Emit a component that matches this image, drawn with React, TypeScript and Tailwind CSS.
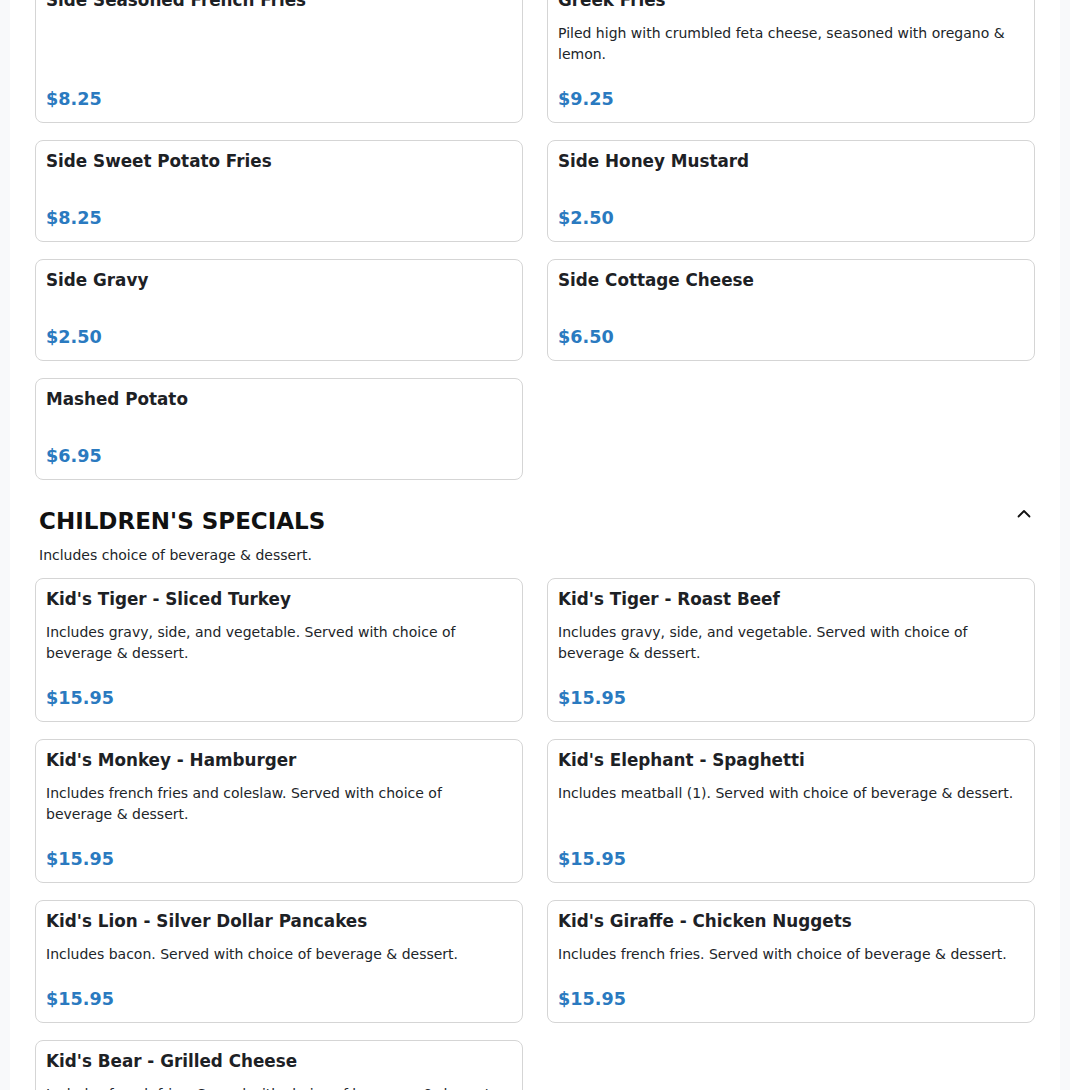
import React from "react";

type Item = { name: string; desc?: string; price: string };

const sides: Item[] = [
  { name: "Side Seasoned French Fries", price: "$8.25" },
  {
    name: "Greek Fries",
    desc: "Piled high with crumbled feta cheese, seasoned with oregano & lemon.",
    price: "$9.25",
  },
  { name: "Side Sweet Potato Fries", price: "$8.25" },
  { name: "Side Honey Mustard", price: "$2.50" },
  { name: "Side Gravy", price: "$2.50" },
  { name: "Side Cottage Cheese", price: "$6.50" },
  { name: "Mashed Potato", price: "$6.95" },
];

const kids: Item[] = [
  {
    name: "Kid's Tiger - Sliced Turkey",
    desc: "Includes gravy, side, and vegetable. Served with choice of beverage & dessert.",
    price: "$15.95",
  },
  {
    name: "Kid's Tiger - Roast Beef",
    desc: "Includes gravy, side, and vegetable. Served with choice of beverage & dessert.",
    price: "$15.95",
  },
  {
    name: "Kid's Monkey - Hamburger",
    desc: "Includes french fries and coleslaw. Served with choice of beverage & dessert.",
    price: "$15.95",
  },
  {
    name: "Kid's Elephant - Spaghetti",
    desc: "Includes meatball (1). Served with choice of beverage & dessert.",
    price: "$15.95",
  },
  {
    name: "Kid's Lion - Silver Dollar Pancakes",
    desc: "Includes bacon. Served with choice of beverage & dessert.",
    price: "$15.95",
  },
  {
    name: "Kid's Giraffe - Chicken Nuggets",
    desc: "Includes french fries. Served with choice of beverage & dessert.",
    price: "$15.95",
  },
  {
    name: "Kid's Bear - Grilled Cheese",
    desc: "Includes french fries. Served with choice of beverage & dessert.",
    price: "$15.95",
  },
];

function Card({ item }: { item: Item }) {
  return (
    <div className="flex flex-col rounded-[8px] border border-[#d5d5d5] bg-white px-[10px] pt-[10px] pb-[12px]">
      <h3 className="text-[16.8px] font-bold leading-[21px] text-[#1d2125]">{item.name}</h3>
      <p className="mt-[12px] text-[14px] leading-[21px] text-[#212529]">{item.desc ?? ""}</p>
      <div className="mt-auto pt-[24px] text-[17.6px] font-bold leading-[1.2] text-[#2a7ac0]">
        {item.price}
      </div>
    </div>
  );
}

export default function App() {
  return (
    <div
      className="h-[1090px] overflow-hidden bg-[#f8f9fa]"
      style={{ fontFamily: '"DejaVu Sans", sans-serif' }}
    >
      <div className="mx-[10px] bg-white px-[25px] pb-[40px]">
        <div className="-mt-[21px] grid grid-cols-2 gap-x-[24px] gap-y-[17px]">
          {sides.map((it) => (
            <Card key={it.name} item={it} />
          ))}
        </div>

        <div className="mt-[28px] flex items-start justify-between px-[4px]">
          <h2 className="text-[23px] font-bold leading-[1.2] text-[#111]">CHILDREN'S SPECIALS</h2>
          <svg width="14" height="14" viewBox="0 0 14 14" className="-mt-[1px]" fill="none">
            <polyline
              points="1.5,9.5 7,4 12.5,9.5"
              stroke="#111"
              strokeWidth="1.8"
              strokeLinecap="round"
              strokeLinejoin="round"
            />
          </svg>
        </div>
        <p className="mt-[9px] px-[4px] text-[14px] leading-[21px] text-[#212529]">
          Includes choice of beverage &amp; dessert.
        </p>

        <div className="mt-[12px] grid grid-cols-2 gap-x-[24px] gap-y-[17px]">
          {kids.map((it) => (
            <Card key={it.name} item={it} />
          ))}
        </div>
      </div>
    </div>
  );
}
